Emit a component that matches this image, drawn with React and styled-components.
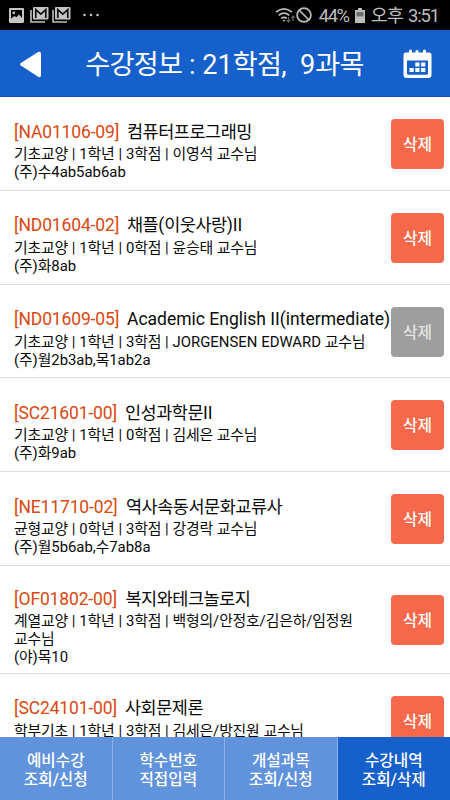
import React from "react";
import styled, { createGlobalStyle } from "styled-components";

const GlobalStyle = createGlobalStyle`
  * { box-sizing: border-box; }
  body { margin: 0; background: #fff; font-family: Roboto, "Noto Sans CJK KR", sans-serif; }
`;

const Screen = styled.div`
  width: 450px;
  height: 800px;
  display: flex;
  flex-direction: column;
  overflow: hidden;
  background: #fff;
`;

const Hangul = styled.span`
  letter-spacing: ${(p) => p.$tight}em;
`;

const StatusBar = styled.div`
  flex: none;
  height: 30px;
  padding: 0 11px 0 9px;
  display: flex;
  justify-content: space-between;
  align-items: center;
  background: #000;
  color: #bdbdbd;
`;

const StatusGroup = styled.div`
  display: flex;
  align-items: center;
  svg { display: block; flex: none; }
`;

const StatusText = styled.span`
  font-size: 18.4px;
  line-height: 28px;
  padding-top: 2px;
  white-space: nowrap;
  margin-left: ${(p) => p.$gap}px;
  letter-spacing: ${(p) => p.$spacing || 0}px;
  word-spacing: 1px;
`;

const Header = styled.header`
  flex: none;
  height: 67px;
  padding: 2px 18px 0 20px;
  display: flex;
  justify-content: space-between;
  align-items: center;
  background: #1560ca;
  border-bottom: 1px solid #1453ad;
  color: #fff;
`;

const Title = styled.h1`
  margin: 0 0 0 5px;
  padding-top: 2px;
  font-size: 27.1px;
  font-weight: 400;
  line-height: 40px;
  white-space: pre;
`;

const IconButton = styled.button`
  border: 0;
  padding: 0;
  background: none;
  display: flex;
`;

const CourseList = styled.ul`
  flex: 1;
  min-height: 0;
  overflow: hidden;
  margin: 0;
  padding: 0;
  list-style: none;
`;

const CourseRow = styled.li`
  height: ${(p) => (p.$tall ? 108 : 93.75)}px;
  padding: ${(p) => (p.$tall ? 22 : 23.5)}px 6px 0 14px;
  display: grid;
  grid-template-columns: 377px 53px;
  align-items: start;
  border-bottom: 1px solid #dedede;
  color: #0a0a0a;
`;

const CourseName = styled.div`
  display: flex;
  gap: 8px;
  height: 24.5px;
  font-size: 17.5px;
  line-height: 23px;
  white-space: nowrap;
`;

const Code = styled.span`
  color: #d9480f;
  width: ${(p) => p.$w}px;
  letter-spacing: -0.15px;
`;

const Detail = styled.div`
  font-size: 14.9px;
  line-height: 18px;
  width: 350px;
  word-spacing: 0.15px;
  word-break: keep-all;
  white-space: ${(p) => (p.$wrap ? "normal" : "nowrap")};
`;

const DeleteButton = styled.button`
  width: 53px;
  height: 50px;
  margin-top: ${(p) => (p.$tall ? 7 : -1.5)}px;
  padding: 0;
  border: 0;
  border-radius: 4px;
  background: ${(p) => (p.$muted ? "#9e9e9e" : "#f5694a")};
  color: ${(p) => (p.$muted ? "#e4e4e4" : "#fff")};
  font: 500 15.8px/52px Roboto, "Noto Sans CJK KR", sans-serif;
`;

const TabBar = styled.nav`
  flex: none;
  height: 63px;
  display: grid;
  grid-template-columns: repeat(4, 1fr);
`;

const Tab = styled.button`
  border: 0;
  border-right: ${(p) => (p.$active ? "0" : "1px solid #8db1e6")};
  padding: 2px 0 0;
  background: ${(p) => (p.$active ? "#1560ca" : "#6093db")};
  color: #fff;
  font: 500 15.7px/19px Roboto, "Noto Sans CJK KR", sans-serif;
  white-space: pre-line;
`;

const courses = [
  { code: "[NA01106-09]", w: 105, name: "컴퓨터프로그래밍", info: "기초교양 | 1학년 | 3학점 | 이영석 교수님", time: "(주)수4ab5ab6ab" },
  { code: "[ND01604-02]", w: 105, name: "채플(이웃사랑)II", info: "기초교양 | 1학년 | 0학점 | 윤승태 교수님", time: "(주)화8ab" },
  { code: "[ND01609-05]", w: 105, name: "Academic English II(intermediate)", info: "기초교양 | 1학년 | 3학점 | JORGENSEN EDWARD 교수님", time: "(주)월2b3ab,목1ab2a", muted: true },
  { code: "[SC21601-00]", w: 103, name: "인성과학문II", info: "기초교양 | 1학년 | 0학점 | 김세은 교수님", time: "(주)화9ab" },
  { code: "[NE11710-02]", w: 104, name: "역사속동서문화교류사", info: "균형교양 | 0학년 | 3학점 | 강경락 교수님", time: "(주)월5b6ab,수7ab8a" },
  { code: "[OF01802-00]", w: 103.5, name: "복지와테크놀로지", info: "계열교양 | 1학년 | 3학점 | 백형의/안정호/김은하/임정원 교수님", time: "(야)목10", tall: true },
  { code: "[SC24101-00]", w: 103, name: "사회문제론", info: "학부기초 | 1학년 | 3학점 | 김세은/방진원 교수님", time: "" },
];

const tabs = ["예비수강\n조회/신청", "학수번호\n직접입력", "개설과목\n조회/신청", "수강내역\n조회/삭제"];

// Tightens runs of Hangul while leaving Latin letters and digits at their natural spacing.
const Mixed = ({ children, tight = -0.028 }) =>
  children.split(/([가-힣]+)/).map((part, i) => (i % 2 ? <Hangul key={i} $tight={tight}>{part}</Hangul> : part));

const PictureIcon = () => (
  <svg width="15" height="15" viewBox="0 0 15 15">
    <rect width="15" height="15" rx="1" fill="#c4c6c4" />
    <path d="M2 2h11v8l-3-3.5-2.5 2.8L5.5 8 2 10.5z" fill="#000" />
    <circle cx="4.8" cy="4.8" r="1.4" fill="#c4c6c4" />
  </svg>
);

const MailIcon = () => (
  <svg width="19" height="16" viewBox="0 0 19 16">
    <path d="M1 3v12h14" fill="none" stroke="#bfc1bf" strokeWidth="1.6" />
    <rect x="3" y="0" width="15.5" height="12.5" rx="1" fill="#c4c6c4" />
    <path d="M5.8 11V2.6l5 4.6 5-4.6V11" fill="none" stroke="#111" strokeWidth="1.7" />
  </svg>
);

const WifiIcon = () => (
  <svg width="21" height="18" viewBox="0 0 21 18" fill="none" stroke="#bdbdbd" strokeWidth="1.7">
    <path d="M1 6.2Q9 -.5 17 6.2M3.7 9.4Q9 5 14.3 9.4M6.2 12.4Q9 10.2 11.8 12.4" />
    <path d="M7.5 14h3L9 16z" fill="#bdbdbd" stroke="none" />
    <path d="M13.5 11v5m-1.7-2 1.7 2 1.7-2M18 15v-5m-1.5 2 1.5-2 1.5 2" stroke="#656565" strokeWidth="1.2" />
  </svg>
);

const BlockIcon = () => (
  <svg width="16" height="16" viewBox="0 0 16 16" fill="none" stroke="#bdbdbd" strokeWidth="1.7">
    <circle cx="8" cy="8" r="6.9" />
    <path d="m3 3 10 10" />
  </svg>
);

const BatteryIcon = () => (
  <svg width="10" height="15" viewBox="0 0 10 15">
    <path d="M3 0h4v2h3v13H0V2h3z" fill="#bdbdbd" />
    <path d="M1.5 4h7v4.5h-7z" fill="#6f6f6f" />
  </svg>
);

const BackIcon = () => (
  <svg width="21" height="27" viewBox="0 0 21 27">
    <path d="M0.5 12.3Q-.3 13.3.5 14.2L18.5 26Q21 27 21 24V3Q21 0 18.5 .8z" fill="#fff" />
  </svg>
);

const CalendarIcon = () => (
  <svg width="29" height="30" viewBox="0 0 29 30">
    <path d="M3 3.5h3V1.500Q7.500-.6 9 1.500v2h3.500V1.800q1.500-1.600 3 0v1.700H20v-2Q21.500-.6 23 1.500v2h3q2.500 0 2.500 2.500V26q0 3-3 3h-22q-3 0-3-3V6Q.5 3.500 3 3.500z" fill="#fff" />
    <path d="M4 11.500h21v12.800q0 1.500-1.500 1.500h-18q-1.500 0-1.500-1.500z" fill="#1560ca" />
    <path d="M12.300 13.500h4.200v4h-4.200zm5.800 0h4.200v4h-4.200zM6.500 19h4.200v4H6.500zm5.800 0h4.200v4h-4.200zm5.800 0h4.200v4h-4.200z" fill="#fff" />
  </svg>
);

const Dots = () => (
  <svg width="16" height="4" viewBox="0 0 16 4" fill="#c4c4c4">
    <circle cx="1.5" cy="2" r="1.3" />
    <circle cx="8" cy="2" r="1.3" />
    <circle cx="14.5" cy="2" r="1.3" />
  </svg>
);

const NoticeGroup = styled(StatusGroup)`
  gap: 3px;
  svg:first-child { margin-right: 3px; }
  svg:last-child { margin-left: 9px; }
`;

const SystemGroup = styled(StatusGroup)`
  svg:nth-of-type(3) { margin-left: 6px; }
`;

export default function App() {
  return (
    <Screen>
      <GlobalStyle />
      <StatusBar>
        <NoticeGroup><PictureIcon /><MailIcon /><MailIcon /><Dots /></NoticeGroup>
        <SystemGroup>
          <WifiIcon />
          <BlockIcon />
          <StatusText $gap={7} $spacing={-1.4}>44%</StatusText>
          <BatteryIcon />
          <StatusText $gap={6} $spacing={-1.1}><Mixed>오후 3:51</Mixed></StatusText>
        </SystemGroup>
      </StatusBar>
      <Header>
        <IconButton aria-label="뒤로"><BackIcon /></IconButton>
        <Title><Mixed tight={-0.024}>{"수강정보 : 21학점,  9과목"}</Mixed></Title>
        <IconButton aria-label="달력"><CalendarIcon /></IconButton>
      </Header>
      <CourseList>
        {courses.map((c) => (
          <CourseRow key={c.code} $tall={c.tall}>
            <div>
              <CourseName><Code $w={c.w}>{c.code}</Code><span><Mixed>{c.name}</Mixed></span></CourseName>
              <Detail $wrap={c.tall}><Mixed tight={-0.015}>{c.info}</Mixed></Detail>
              <Detail><Mixed tight={-0.015}>{c.time}</Mixed></Detail>
            </div>
            <DeleteButton $muted={c.muted} $tall={c.tall}>삭제</DeleteButton>
          </CourseRow>
        ))}
      </CourseList>
      <TabBar>
        {tabs.map((t, i) => <Tab key={t} $active={i === 3}>{t}</Tab>)}
      </TabBar>
    </Screen>
  );
}
